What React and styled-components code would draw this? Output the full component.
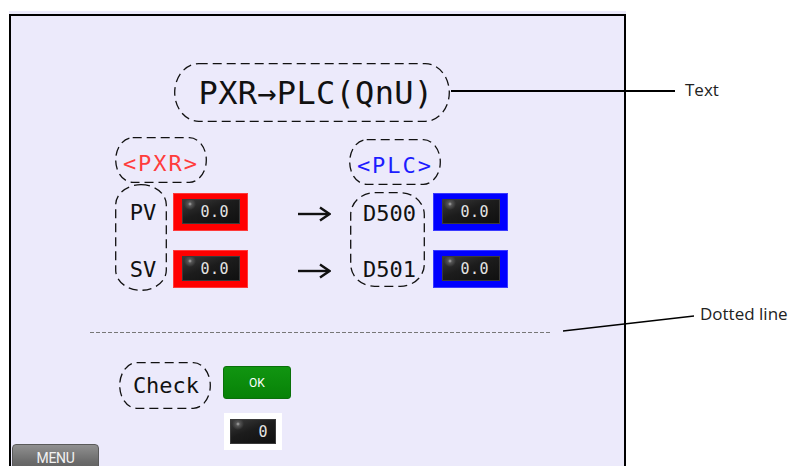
import React from "react";
import styled, { createGlobalStyle } from "styled-components";

const Global = createGlobalStyle`
  body {
    margin: 0;
    background: #fff;
  }
`;

const HMI_FONT = `"DejaVu Sans Mono", "Liberation Mono", monospace`;

const Page = styled.div`
  position: relative;
  width: 795px;
  height: 466px;
  overflow: hidden;
  background: #fff;
`;

const Frame = styled.div`
  margin: 11px 0 0 9px;
  width: 617px;
  padding-top: 3px;
  background: #eceafb;
`;

const Panel = styled.div`
  display: flex;
  flex-direction: column;
  align-items: flex-start;
  min-height: 500px;
  border: 2px solid #000;
  border-bottom: none;
  background: #eceafb;
  font-family: ${HMI_FONT};
  color: #111;
`;

const BubbleBox = styled.div`
  position: relative;
  flex-shrink: 0;
  width: ${(p) => p.$w}px;
  height: ${(p) => p.$h}px;
  display: flex;
  flex-direction: column;
  align-items: center;
  justify-content: center;
`;

const Outline = styled.svg`
  position: absolute;
  left: 0;
  top: 0;
  overflow: visible;
  pointer-events: none;
`;

const Bubble = ({ w, h, rx, ry, className, children }) => (
  <BubbleBox $w={w} $h={h} className={className}>
    <Outline width={w} height={h}>
      <rect
        x="0.7"
        y="0.7"
        width={w - 1.4}
        height={h - 1.4}
        rx={rx}
        ry={ry}
        fill="none"
        stroke="#111"
        strokeWidth="1.3"
        strokeDasharray="9 5"
      />
    </Outline>
    {children}
  </BubbleBox>
);

const TitleBubble = styled(Bubble)`
  margin: 47px 0 0 163px;
  padding-left: 8px;
  box-sizing: border-box;
`;

const Title = styled.span`
  font-size: 32px;
  line-height: 34px;
  letter-spacing: 0.3px;
`;

const HeaderRow = styled.div`
  display: flex;
  align-items: flex-start;
  margin: 15px 0 0 104px;
`;

const PlcBubble = styled(Bubble)`
  margin: 2px 0 0 142px;
`;

const Tag = styled.span`
  font-size: 22px;
  line-height: 22px;
  letter-spacing: 2px;
  padding-top: 8px;
  color: ${(p) => p.$color};
`;

const DataBlock = styled.div`
  display: flex;
  align-items: flex-start;
  margin: -1px 0 0 104px;
`;

const LabelGroup = styled(Bubble)`
  justify-content: flex-start;
  gap: ${(p) => p.gap}px;
  padding-top: ${(p) => p.top}px;
  box-sizing: border-box;
  margin: ${(p) => p.$offset || 0}px 0 0 ${(p) => p.$left || 0}px;
`;

const Label = styled.span`
  font-size: 22px;
  line-height: 22px;
  padding-left: ${(p) => p.$shift || 0}px;
`;

const Column = styled.div`
  display: flex;
  flex-direction: column;
  gap: 19px;
  margin: 9px 0 0 ${(p) => p.$left}px;
`;

const Frame75 = styled.div`
  width: 75px;
  height: 38px;
  box-sizing: border-box;
  padding: 6px 8px 7px 9px;
  background: ${(p) => p.$color};
  box-shadow: inset 0 0 0 1px ${(p) => p.$edge};
`;

const Readout = styled.div`
  height: 100%;
  box-sizing: border-box;
  display: flex;
  align-items: center;
  justify-content: flex-end;
  padding-right: ${(p) => p.$pad || 10}px;
  border: 1px solid #3a3a3a;
  background:
    radial-gradient(circle at 7px 4px, #b0b0b0 0, #555 2px, transparent 6px),
    linear-gradient(160deg, #3a3a3a 0%, #1c1c1c 45%, #101010 100%);
  color: #e4e4e4;
  font-family: ${HMI_FONT};
  font-size: 15px;
  letter-spacing: 0.5px;
`;

const ArrowCell = styled.div`
  height: 38px;
  display: flex;
  align-items: center;
  padding-top: 4px;
  box-sizing: border-box;
`;

const Arrow = () => (
  <svg width="33" height="16" viewBox="0 0 33 16">
    <line x1="0" y1="8" x2="31" y2="8" stroke="#111" strokeWidth="2.4" />
    <polyline
      points="22,1.5 31.5,8 22,14.5"
      fill="none"
      stroke="#111"
      strokeWidth="2.4"
    />
  </svg>
);

const Value = ({ color, edge }) => (
  <Frame75 $color={color} $edge={edge}>
    <Readout>0.0</Readout>
  </Frame75>
);

const Divider = styled.div`
  margin: 41px 0 0 79px;
  width: 462px;
  height: 1px;
  background: repeating-linear-gradient(
    to right,
    #777 0 4px,
    transparent 4px 6px
  );
`;

const CheckRow = styled.div`
  display: flex;
  align-items: flex-start;
  margin: 29px 0 0 108px;
`;

const CheckLabel = styled.span`
  font-size: 22px;
  line-height: 24px;
  padding-left: 2px;
`;

const CheckColumn = styled.div`
  display: flex;
  flex-direction: column;
  align-items: flex-start;
  margin: 4px 0 0 12px;
`;

const OkButton = styled.div`
  width: 68px;
  height: 33px;
  box-sizing: border-box;
  border-radius: 3px;
  border: 1px solid #0a700a;
  background: linear-gradient(#119511, #078207);
  color: #fff;
  display: flex;
  align-items: center;
  justify-content: center;
  font-family: "Roboto", "Liberation Sans", sans-serif;
  font-size: 12px;
`;

const CountBox = styled.div`
  margin: 14px 0 0 1px;
  width: 58px;
  height: 37px;
  box-sizing: border-box;
  padding: 6px;
  background: #fff;
`;

const MenuButton = styled.div`
  margin: -6px 0 0 1px;
  width: 87px;
  height: 30px;
  box-sizing: border-box;
  padding-top: 5px;
  border: 1px solid #5a5a5a;
  border-radius: 4px 4px 0 0;
  background: linear-gradient(#909090, #6a6a6a 60%, #5c5c5c);
  color: #f2f2f2;
  text-align: center;
  font-family: "Roboto", "Liberation Sans", sans-serif;
  font-size: 14px;
  line-height: 16px;
  letter-spacing: -0.3px;
`;

const Leaders = styled.svg`
  position: absolute;
  left: 0;
  top: 0;
  pointer-events: none;
`;

const Note = styled.span`
  position: absolute;
  left: ${(p) => p.$x}px;
  top: ${(p) => p.$y}px;
  font-family: "Open Sans", "Noto Sans", sans-serif;
  font-size: 17px;
  line-height: 22px;
  color: #222;
`;

export default function App() {
  return (
    <Page>
      <Global />
      <Frame>
        <Panel>
          <TitleBubble w={276} h={59} rx={24} ry={29}>
            <Title>PXR→PLC(QnU)</Title>
          </TitleBubble>

          <HeaderRow>
            <Bubble w={92} h={46} rx={17} ry={23}>
              <Tag $color="#ff3c3c">&lt;PXR&gt;</Tag>
            </Bubble>
            <PlcBubble w={92} h={46} rx={17} ry={23}>
              <Tag $color="#1c1cff">&lt;PLC&gt;</Tag>
            </PlcBubble>
          </HeaderRow>

          <DataBlock>
            <LabelGroup w={52} h={107} rx={26} ry={20} top={18} gap={35}>
              <Label $shift={4}>PV</Label>
              <Label $shift={4}>SV</Label>
            </LabelGroup>
            <Column $left={6}>
              <Value color="#ff0000" edge="#ff3a3a" />
              <Value color="#ff0000" edge="#ff3a3a" />
            </Column>
            <Column $left={50}>
              <ArrowCell>
                <Arrow />
              </ArrowCell>
              <ArrowCell>
                <Arrow />
              </ArrowCell>
            </Column>
            <LabelGroup
              w={75}
              h={95}
              rx={24}
              ry={22}
              top={11}
              gap={34}
              $left={19}
              $offset={8}
            >
              <Label $shift={4}>D500</Label>
              <Label $shift={4}>D501</Label>
            </LabelGroup>
            <Column $left={8}>
              <Value color="#0000ff" edge="#3a3aff" />
              <Value color="#0000ff" edge="#3a3aff" />
            </Column>
          </DataBlock>

          <Divider />

          <CheckRow>
            <Bubble w={92} h={47} rx={17} ry={23}>
              <CheckLabel>Check</CheckLabel>
            </Bubble>
            <CheckColumn>
              <OkButton>OK</OkButton>
              <CountBox>
                <Readout $pad={7}>0</Readout>
              </CountBox>
            </CheckColumn>
          </CheckRow>

          <MenuButton>MENU</MenuButton>
        </Panel>
      </Frame>

      <Leaders width="795" height="466">
        <line x1="451" y1="91" x2="675" y2="91" stroke="#000" strokeWidth="2" />
        <line x1="563" y1="331" x2="694" y2="316" stroke="#000" strokeWidth="1.3" />
      </Leaders>
      <Note $x={685} $y={79}>Text</Note>
      <Note $x={700} $y={303}>Dotted line</Note>
    </Page>
  );
}
